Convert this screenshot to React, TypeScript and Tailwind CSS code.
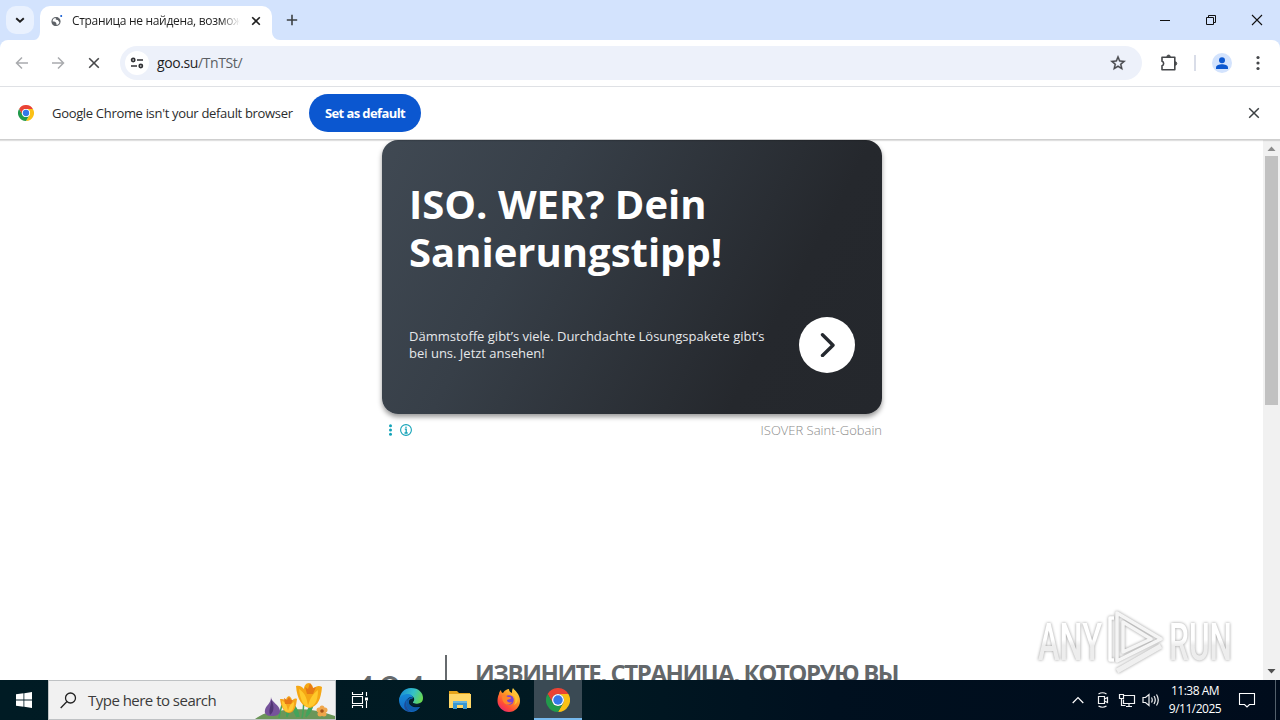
import React from 'react';

interface IconProps {
  className?: string;
}

const ChromeLogo: React.FC<IconProps> = ({ className }) => (
  <svg viewBox="0 0 48 48" className={className}>
    <path d="M3.2 12A24 24 0 0 1 44.8 12H24a12 12 0 0 0-10.4 18Z" fill="#ea4335" />
    <path d="M44.8 12A24 24 0 0 1 24 48l10.4-18A12 12 0 0 0 24 12Z" fill="#fbc116" />
    <path d="M24 48A24 24 0 0 1 3.2 12l10.4 18a12 12 0 0 0 20.8 0Z" fill="#229a4b" />
    <circle cx="24" cy="24" r="12" fill="#fff" />
    <circle cx="24" cy="24" r="9.5" fill="#3478ea" />
  </svg>
);

const TabStrip: React.FC = () => (
  <div className="flex h-10 shrink-0 items-end bg-[#d3e3fd]">
    <button className="mb-1.5 ml-1.5 flex h-7 w-7 items-center justify-center self-end rounded-[10px] bg-[#e9f1fe]">
      <svg viewBox="0 0 10 10" className="h-2.5 w-2.5" fill="none" stroke="#1f1f1f" strokeWidth="1.9">
        <path d="M1.2 3.2 5 6.8l3.8-3.6" />
      </svg>
    </button>
    <svg viewBox="0 0 6 8" className="h-2 w-1.5" fill="#fff">
      <path d="M6 0v8H0a6 8 0 0 0 6-8" />
    </svg>
    <div className="flex h-[34px] w-[232px] items-center rounded-t-[10px] bg-white pb-[5px] pl-2.5">
      <svg viewBox="0 0 14 14" className="h-3.5 w-3.5 shrink-0">
        <circle cx="6" cy="7.5" r="4" fill="none" stroke="#5f6368" strokeWidth="1.2" />
        <path d="M2 7.5c2 0 3-.2 4 1.2s.5 2 .2 3.2C3.6 12 1.6 10 2 7.5ZM6 4c-1 1.2.2 2 1.4 2S8 7.8 10 8c.4-2-1-4-2.4-4.6Z" fill="#5f6368" />
        <circle cx="11.2" cy="2" r="1" fill="#0b57d0" />
      </svg>
      <div className="ml-2 w-[168px] overflow-hidden text-[12px] leading-4 tracking-[-0.31px] whitespace-nowrap text-[#1f1f1f] [mask-image:linear-gradient(to_right,black_148px,transparent_168px)]">
        Страница не найдена, возможно
      </div>
      <svg viewBox="0 0 10 10" className="ml-[11px] h-2.5 w-2.5 shrink-0" stroke="#1f1f1f" strokeWidth="1.6">
        <path d="m1.2 1.2 7.6 7.6m0-7.6L1.2 8.8" />
      </svg>
    </div>
    <svg viewBox="0 0 8 8" className="h-2 w-2" fill="#fff">
      <path d="M0 0v8h8a8 8 0 0 1-8-8" />
    </svg>
    <svg viewBox="0 0 12 12" className="mb-3.5 ml-1.5 h-3 w-3" stroke="#3c4043" strokeWidth="1.6">
      <path d="M6 .8v10.4M.8 6h10.4" />
    </svg>
    <div className="mr-[17px] mb-3.5 ml-auto flex items-center">
      <svg viewBox="0 0 12 12" className="h-3 w-3" stroke="#111" fill="none">
        <path d="M1 6.5h10" />
      </svg>
      <svg viewBox="0 0 12 12" className="ml-[34px] h-3 w-3" stroke="#111" fill="none">
        <path d="M1.5 3.5h7v7h-7zM3.5 3.5v-2h7v7h-2" />
      </svg>
      <svg viewBox="0 0 12 12" className="ml-[34px] h-3 w-3" stroke="#111" fill="none" strokeWidth="1.1">
        <path d="m1 1 10 10M11 1 1 11" />
      </svg>
    </div>
  </div>
);

const Toolbar: React.FC = () => (
  <div className="shrink-0 bg-[#d3e3fd]">
    <div className="flex h-[47px] items-center rounded-t-lg border-b border-[#dfe1e5] bg-white pl-[15px]">
      <svg viewBox="0 0 14 14" className="h-3.5 w-3.5" fill="none" stroke="#a9abae" strokeWidth="1.5">
        <path d="M13 7H1.8M7 1.5 1.5 7 7 12.5" />
      </svg>
      <svg viewBox="0 0 14 14" className="ml-[22px] h-3.5 w-3.5" fill="none" stroke="#a9abae" strokeWidth="1.5">
        <path d="M1 7h11.2M7 1.5 12.5 7 7 12.5" />
      </svg>
      <svg viewBox="0 0 12 12" className="ml-[23px] h-3 w-3" fill="none" stroke="#47484a" strokeWidth="1.6">
        <path d="m1.2 1.2 9.6 9.6m0-9.6-9.6 9.6" />
      </svg>
      <div className="ml-5 flex h-[34px] w-[1022px] items-center rounded-full bg-[#edf1fa] pl-[5px]">
        <div className="flex h-6 w-6 items-center justify-center rounded-full bg-white">
          <svg viewBox="0 0 14 12" className="h-3 w-3.5" fill="none" stroke="#303134" strokeWidth="1.7">
            <circle cx="3.2" cy="3" r="1.6" />
            <path d="M7 3h6M1 9h6" />
            <circle cx="10.8" cy="9" r="1.6" />
          </svg>
        </div>
        <span className="ml-2 text-[14px] leading-5 tracking-[-0.4px] text-[#1f1f1f]">
          goo.su<span className="text-[#5b5e63]">/TnTSt/</span>
        </span>
        <svg viewBox="0 0 24 24" className="mr-[15px] ml-auto h-[18px] w-[18px]" fill="#45474a" stroke="#45474a" strokeWidth=".5">
          <path d="m22 9.24-7.19-.62L12 2 9.19 8.63 2 9.24l5.46 4.73L5.82 21 12 17.27 18.18 21l-1.63-7.03L22 9.24zM12 15.4l-3.76 2.27 1-4.28-3.32-2.88 4.38-.38L12 6.1l1.71 4.04 4.38.38-3.32 2.88 1 4.28L12 15.4z" />
        </svg>
      </div>
      <svg viewBox="0 0 18 18" className="ml-[18px] h-[18px] w-[18px]" fill="none" stroke="#45474a" strokeWidth="1.6" strokeLinejoin="round">
        <path d="M2 3.2h12.8v12.6H2v-4.1a2.3 2.3 0 0 0 0-4.4Z" />
        <path d="M6.8 2.8a1.8 1.8 0 0 1 3.6 0ZM15 7.7a1.8 1.8 0 0 1 0 3.6Z" fill="#45474a" strokeWidth=".8" />
      </svg>
      <div className="ml-4 h-4 w-0.5 bg-[#d9dde8]" />
      <svg viewBox="0 0 20 20" className="ml-4 h-5 w-5">
        <circle cx="10" cy="10" r="10" fill="#d3e3fd" />
        <circle cx="10" cy="7.2" r="3" fill="#0b57d0" />
        <path d="M4 16v-1.6c0-2 3.4-3.2 6-3.2s6 1.2 6 3.2V16Z" fill="#0b57d0" />
      </svg>
      <svg viewBox="0 0 4 16" className="ml-6 h-4 w-1" fill="#45474a">
        <circle cx="2" cy="2.5" r="1.6" />
        <circle cx="2" cy="8" r="1.6" />
        <circle cx="2" cy="13.5" r="1.6" />
      </svg>
    </div>
  </div>
);

const DefaultBrowserBar: React.FC = () => (
  <div className="relative z-10 flex h-[53px] shrink-0 items-center border-b border-[#cfcfcf] bg-white pl-[18px] shadow-[0_1px_1px_rgba(0,0,0,0.12)]">
    <ChromeLogo className="h-4 w-4" />
    <span className="ml-[18px] w-[241px] text-[13px] leading-5 tracking-[-0.32px] whitespace-nowrap text-[#2b2c2e]">
      Google Chrome isn't your default browser
    </span>
    <button className="ml-4 h-[38px] w-28 rounded-full bg-[#0b57d0] pt-px text-[13px] font-bold tracking-[-0.6px] whitespace-nowrap text-white">
      Set as default
    </button>
    <svg viewBox="0 0 12 12" className="mr-5 ml-auto h-3 w-3" stroke="#3c4043" strokeWidth="1.5">
      <path d="m1.2 1.2 9.6 9.6m0-9.6-9.6 9.6" />
    </svg>
  </div>
);

const AdCard: React.FC = () => (
  <div className="ml-[382px] w-[500px]">
    <div className="flex h-[274px] flex-col rounded-2xl bg-[linear-gradient(118deg,#404953_0%,#373f48_30%,#25282d_76%,#24272c_100%)] pr-[27px] pl-[27px] shadow-[0_3px_5px_rgba(0,0,0,0.4)]">
      <h2 className="mt-10 text-[40px] leading-[48px] font-bold whitespace-nowrap text-white">
        ISO. WER? Dein
        <br />
        Sanierungstipp!
      </h2>
      <div className="mt-[41px] flex items-center justify-between">
        <p className="text-[13px] leading-[17px] whitespace-nowrap text-[#e6e8ea]">
          Dämmstoffe gibt’s viele. Durchdachte Lösungspakete gibt’s
          <br />
          bei uns. Jetzt ansehen!
        </p>
        <div className="flex h-14 w-14 items-center justify-center rounded-full bg-white">
          <svg viewBox="0 0 24 24" className="h-6 w-6" fill="none" stroke="#25292f" strokeWidth="3.4" strokeLinecap="round" strokeLinejoin="round">
            <path d="m7.5 1.8 10.5 10.4L7.5 22.5" />
          </svg>
        </div>
      </div>
    </div>
    <div className="mt-1.5 flex h-5 items-center">
      <svg viewBox="0 0 4 12" className="ml-1.5 h-3 w-1" fill="#14a3b8">
        <circle cx="2.5" cy="1.8" r="1.5" />
        <circle cx="2.5" cy="6" r="1.5" />
        <circle cx="2.5" cy="10.2" r="1.5" />
      </svg>
      <svg viewBox="0 0 12 12" className="ml-2 h-3 w-3" fill="none" stroke="#14a3b8">
        <circle cx="6" cy="6" r="5.4" strokeWidth="1.1" />
        <path d="M4.8 5.2h1.4v3.6M4.5 9h3.2" strokeWidth="1.3" />
        <circle cx="6" cy="3.2" r=".8" fill="#14a3b8" stroke="none" />
      </svg>
      <span className="ml-auto text-[13px] leading-5 font-light whitespace-nowrap text-[#8a8a8a]">ISOVER Saint-Gobain</span>
    </div>
  </div>
);

const Watermark: React.FC = () => (
  <svg
    viewBox="0 0 204 70"
    className="absolute top-[466px] left-[1035px] h-[70px] w-[204px] [filter:drop-shadow(0_0_1.5px_rgba(0,0,0,0.4))]"
    fill="none"
    stroke="#fff"
    strokeLinejoin="round"
  >
    <defs>
      <linearGradient id="markFill" x1="0" y1="0" x2="0" y2="1">
        <stop offset=".45" stopColor="#fff" />
        <stop offset=".55" stopColor="#ededed" />
      </linearGradient>
    </defs>
    <g fill="url(#markFill)" stroke="none" fontFamily="Roboto, sans-serif" fontSize="51" fontWeight="500">
      <text x="3" y="54" textLength="64" lengthAdjust="spacingAndGlyphs">ANY</text>
      <text x="134" y="54" textLength="63" lengthAdjust="spacingAndGlyphs">RUN</text>
    </g>
    <path d="M82 7v48l44-22ZM88 16v30l28-13Z" strokeWidth="3.5" stroke="#f5f5f5" />
    <path d="M79 12h-4v42h4" strokeWidth="3.5" />
    <path d="m82 65 44-25" strokeWidth="5" stroke="#f0f0f0" />
  </svg>
);

const Page: React.FC = () => (
  <div className="relative flex h-[540px] shrink-0 overflow-hidden bg-white">
    <div className="flex min-w-0 flex-1 flex-col">
      <AdCard />
      <div className="mt-[215px] flex">
        <div className="mt-[11px] ml-[353px] w-[92px] font-['Lato'] text-[40px] leading-[48px] tracking-[2px] text-[#666a6d]">404</div>
        <div className="h-24 w-0.5 bg-[#666a6d]" />
        <h1 className="mt-0.5 ml-7 font-['Open_Sans'] text-[24px] leading-8 font-bold tracking-[-1.43px] whitespace-nowrap text-[#63676a]">
          ИЗВИНИТЕ, СТРАНИЦА, КОТОРУЮ ВЫ
        </h1>
      </div>
    </div>
    <div className="flex w-[17px] flex-col items-center bg-[#f1f1f1]">
      <svg viewBox="0 0 9 5" className="mt-1.5 h-[5px] w-[9px]" fill="#8b8b8b">
        <path d="M.5 5h8l-4-4.5Z" />
      </svg>
      <div className="mt-[5px] h-[249px] w-[13px] bg-[#c1c1c1]" />
      <svg viewBox="0 0 9 5" className="mt-auto mb-1.5 h-[5px] w-[9px]" fill="#505050">
        <path d="M.5 0h8l-4 4.5Z" />
      </svg>
    </div>
    <Watermark />
  </div>
);

const Flowers: React.FC = () => (
  <svg viewBox="0 0 80 38" className="h-[38px] w-20">
    <path d="M0 38c7-5 14-8 24-8 13-3 36-3 56 5v3Z" fill="#6b9659" />
    <path d="M24 37C25 31 26 27 27 24M47 37c2-7 1-12 2-16M32 36c-1-6 0-9 3-11 0 5-1 7-3 11M42 36c-3-5-4-8-4-13 3 3 5 7 6 13M51 36c1-7 4-11 7-13-1 6-3 9-7 13" fill="#43a45b" stroke="#43a45b" strokeWidth="1.5" />
    <path d="M16 16c0 5 9 8 9 14 0 4-4 5-8 5-5 0-8-2-7-6 1-5 6-6 6-13Z" fill="#76539b" />
    <path d="M16 18c1 6-3 10-1 16 5-4 4-10 1-16Z" fill="#513575" />
    <path d="M25 18c3 0 4 0 6 2 0-3 1-4 3-5 2 1 3 3 3 5 1-2 3-3 5-2-1 7-2 13-8 14-6-1-8-7-9-14Z" fill="#f6a51b" />
    <path d="M27 20c4 1 5 5 6 10 1-5 3-8 6-9 0 7-2 10-6 10s-6-5-6-11Z" fill="#ffc934" />
    <path d="m29 17 3 2 2-3 2 3h2l-2 4h-6Z" fill="#e67817" />
    <path d="M41 5c4-1 6 1 8 3 0-3 2-6 5-6 3 1 4 3 4 6 3-3 6-4 9-2-1 12-4 19-12 21-8-1-13-9-14-22Z" fill="#f5a714" />
    <path d="M44 8c6 4 8 9 9 17 2-8 5-12 10-16 0 12-4 17-9 17s-9-7-10-18Z" fill="#ffca2c" />
    <path d="m50 6 3 2 2-6 3 5 3-1-3 7h-6Z" fill="#e77b15" />
    <g fill="#efa64b">
      <circle cx="64" cy="29" r="2.5" />
      <circle cx="67" cy="27" r="2.5" />
      <circle cx="70" cy="29" r="2.5" />
      <circle cx="69" cy="33" r="2.5" />
      <circle cx="65" cy="33" r="2.5" />
    </g>
    <circle cx="67" cy="30" r="1.8" fill="#a65319" />
  </svg>
);

const EdgeLogo: React.FC = () => (
  <svg viewBox="0 0 24 24" className="h-6 w-6">
    <defs>
      <linearGradient id="edgeTop" x1="0" y1=".3" x2="1" y2=".6">
        <stop stopColor="#168bd5" />
        <stop offset=".55" stopColor="#35c1c8" />
        <stop offset="1" stopColor="#69d84d" />
      </linearGradient>
      <linearGradient id="edgeLow" x1="0" y1="0" x2="0" y2="1">
        <stop stopColor="#168ad8" />
        <stop offset="1" stopColor="#1268c3" />
      </linearGradient>
    </defs>
    <path d="M0 12C1 5 5 0 12 0c8 0 12 5 12 10 0 4-3 6-6 6-2 0-5-1-4-2 3-3 0-7-4-7-5 0-9 2-10 5Z" fill="url(#edgeTop)" />
    <path d="M0 12c0-4 5-6 9-6 3 0 5 2 5 4-3-2-6 0-6 4 0 5 6 7 13 5-2 3-5 5-9 5C5 24 0 18 0 12Z" fill="url(#edgeLow)" />
    <path d="M9.5 10C6 13 6 20 12 24 4 24 3 14 9.5 10Z" fill="#1c4e9b" />
    <path d="M10 14c0 4 5 6 11 5-3 4-7 4-9 4-6-3-6-10-2-13 2-1 4 0 4 1-2 0-4 1-4 3Z" fill="#0f5cab" />
    <path d="M14.5 11c.8 2-1 2.500-.8 3.500.3 1 2.500 1.500 4.500 1.300 2-.2 3-.8 4.500-1.800-.5 2.500-2.500 4.500-5.500 4.500-4 0-7-2-7-5 0-2 2-3 4.300-2.500Z" fill="#04202e" />
  </svg>
);

const FolderIcon: React.FC = () => (
  <svg viewBox="0 0 24 24" className="h-6 w-6">
    <path d="M1 3h8l2 2h11v7H1Z" fill="#e6a51b" />
    <path d="M1 6h22v14H1Z" fill="#ffd767" />
    <path d="M5 13h14v8h-4v-4H9v4H5Z" fill="#3797d3" />
    <path d="M5 13h14v2H5Z" fill="#68b5df" />
  </svg>
);

const FirefoxLogo: React.FC = () => (
  <svg viewBox="0 0 24 24" className="h-6 w-6">
    <defs>
      <linearGradient id="fox" x1=".9" y1="0" x2=".2" y2="1">
        <stop stopColor="#ffe84a" />
        <stop offset=".4" stopColor="#ff9a24" />
        <stop offset=".75" stopColor="#ff4a38" />
        <stop offset="1" stopColor="#e52575" />
      </linearGradient>
    </defs>
    <path d="M2 6c0-2 1-3 2-4 0 2 1 3 2 3 2-3 4-4 6-4 0 2 1 3 3 4 0-2 0-3 1-5 2 3 7 6 7 13 0 6-5 11-11 11S.5 19 .5 13C.5 10 1 8 2 6Z" fill="url(#fox)" />
    <circle cx="12" cy="12" r="4.8" fill="#7842d6" />
    <path d="M5 8c3-1 4 0 6 1 3 0 4 1 2 2l-3 1c0 2 2 3 5 2-2 4-10 4-10-6Z" fill="#ff8529" />
    <path d="M13 6c5 1 7 6 4 11 6-3 5-12-4-11Z" fill="#ffc22f" />
  </svg>
);

const Tray: React.FC = () => (
  <div className="ml-auto flex h-full items-center text-white">
    <svg viewBox="0 0 12 8" className="h-2 w-3" fill="none" stroke="#fff" strokeWidth="1.2">
      <path d="m.7 7 5.3-5.5L11.3 7" />
    </svg>
    <svg viewBox="0 0 14 18" className="ml-3 h-[18px] w-3.5" fill="none" stroke="#f1f2f3" strokeWidth="1.2">
      <path d="M2.5 5.5h6v7h-6zM8.5 8l3-1.5v5l-3-1.5M2.5 3Q6.5.5 10.5 3M2.5 15q4 2.5 8 0" />
    </svg>
    <svg viewBox="0 0 18 16" className="ml-2 h-4 w-[18px]" fill="none" stroke="#f1f2f3" strokeWidth="1.2">
      <path d="M6 3.5h10.5v8H5.5v-4M8 14.5h6M11 11.5v3M1.5 2.5h4v4h-4zM3.5 6.5v7h4" />
    </svg>
    <svg viewBox="0 0 18 16" className="ml-1.5 h-4 w-[18px]" fill="none" stroke="#f1f2f3" strokeWidth="1.2">
      <path d="M1 5.5h2.5L7 2.5v11l-3.500-3H1ZM9.5 5.5q1.5 2.5 0 5M12 4q2.5 4 0 8M14.5 2.5q3.5 5.5 0 11" />
    </svg>
    <div className="ml-[3px] w-[60px] pl-1 text-center text-[12px] leading-[18px] tracking-[-0.5px] whitespace-nowrap">
      <div>11:38 AM</div>
      <div>9/11/2025</div>
    </div>
    <svg viewBox="0 0 18 18" className="ml-[15px] h-[18px] w-[18px]" fill="none" stroke="#fff" strokeWidth="1.1">
      <path d="M1.5 2.5h15v11h-5L9 16l-2.500-2.500h-5Z" />
    </svg>
    <div className="ml-[19px] h-full w-px bg-[#53606b]" />
    <div className="w-1" />
  </div>
);

const Taskbar: React.FC = () => (
  <div className="flex h-10 shrink-0 items-center bg-[linear-gradient(to_right,#001b24_0%,#001922_45%,#00101f_65%,#000c1c_100%)]">
    <div className="flex w-12 justify-center">
      <svg viewBox="0 0 16 16" className="h-4 w-4" fill="#fff">
        <path d="M0 2.3 7.5 1.3v6.2H0ZM8.3 1.2 16 0v7.5H8.3ZM0 8.5h7.5v6.2L0 13.7ZM8.3 8.5H16V16l-7.7-1.2Z" />
      </svg>
    </div>
    <div className="flex h-10 w-72 items-center border border-[#bfc2c4] bg-[#f1f1f1] pl-[11px]">
      <svg viewBox="0 0 17 17" className="h-[17px] w-[17px]" fill="none" stroke="#222" strokeWidth="1.3">
        <circle cx="10.5" cy="6" r="5" />
        <path d="M7 9.5.7 16" />
      </svg>
      <span className="ml-[11px] text-[15px] leading-5 tracking-[-0.52px] whitespace-nowrap text-[#3b3b3b]">Type here to search</span>
      <div className="ml-auto">
        <Flowers />
      </div>
    </div>
    <div className="flex w-12 justify-center">
      <svg viewBox="0 0 18 18" className="h-[18px] w-[18px]" fill="none" stroke="#fff" strokeWidth="1.1">
        <path d="M1.5 5.5h10v7h-10zM1.5 1v2.5h10V1M1.5 17v-2.500h10V17M15.5 1v4M15.5 10v7" />
        <path d="M14 6.5h3v3h-3z" fill="#fff" stroke="none" />
      </svg>
    </div>
    <div className="ml-0.5 flex h-full">
      <div className="flex w-[49px] items-center justify-center">
        <EdgeLogo />
      </div>
      <div className="flex w-[49px] items-center justify-center">
        <FolderIcon />
      </div>
      <div className="flex w-[49px] items-center justify-center">
        <FirefoxLogo />
      </div>
      <div className="ml-px flex w-12 items-center justify-center border-b-2 border-[#76b9ed] bg-[#3a4a54] pt-0.5">
        <ChromeLogo className="h-6 w-6" />
      </div>
    </div>
    <Tray />
  </div>
);

const App: React.FC = () => (
  <div className="flex h-[720px] w-[1280px] flex-col overflow-hidden bg-white font-['Open_Sans',sans-serif]">
    <TabStrip />
    <Toolbar />
    <DefaultBrowserBar />
    <Page />
    <Taskbar />
  </div>
);

export default App;
